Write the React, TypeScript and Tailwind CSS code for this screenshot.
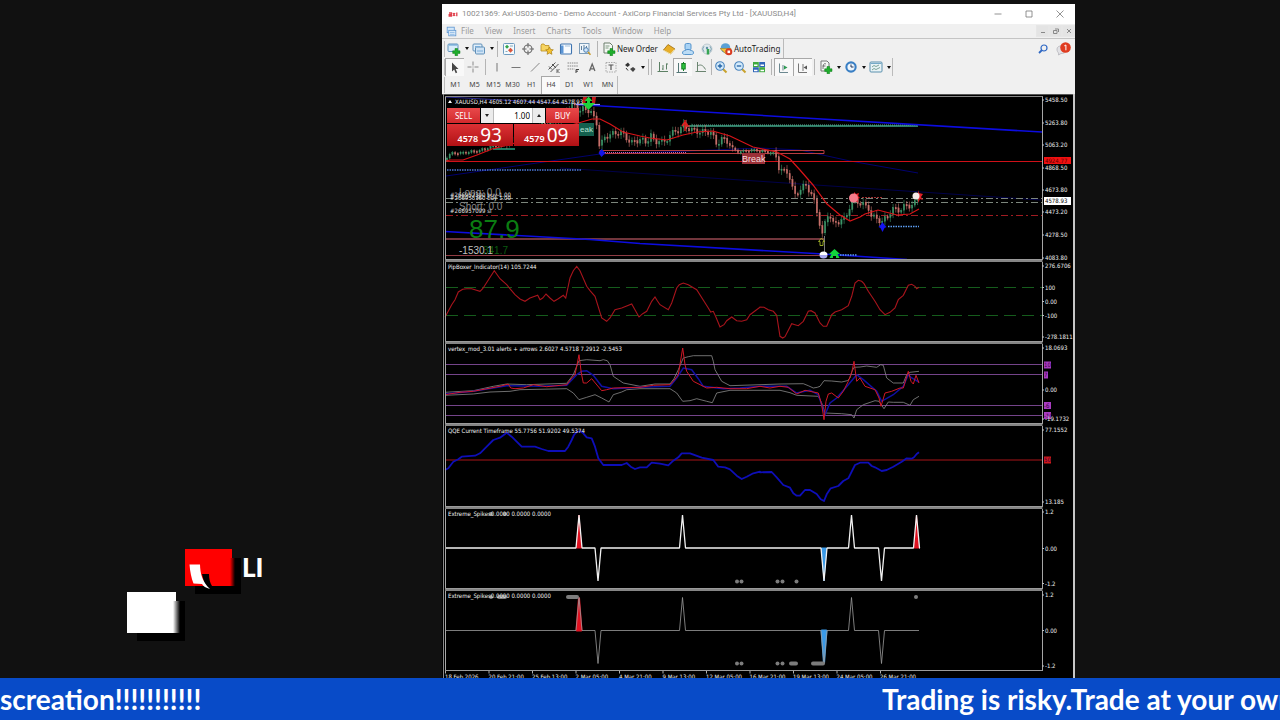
import type { ReactNode } from "react";

/* ---------- helpers ---------- */

// Series are sampled at three units per chart unit, offset by (ox, oy).
function trace(ox: number, oy: number, data: string): string {
  return data
    .trim()
    .split(/\s+/)
    .map((pair) => {
      const [x, y] = pair.split(",").map(Number);
      return `${(ox + x / 3).toFixed(1)},${(oy + y / 3).toFixed(1)}`;
    })
    .join(" ");
}

const UI = "font-['Noto_Sans','Liberation_Sans',sans-serif]";
const CHART = "font-['DejaVu_Sans_Condensed','DejaVu_Sans',sans-serif]";

/* ---------- toolbar icons ---------- */

const plus = <path d="M8 6.5h2.6v2.3H13v2.6h-2.4v2.3H8v-2.3H5.7V8.800H8z" fill="#1fae2c" stroke="#0c7a18" strokeWidth=".5" />;

const icons: Record<string, ReactNode> = {
  newChart: <><rect x="1" y="2" width="10" height="7.500" rx="1" fill="#d8ecfa" stroke="#5f93bd" /><path d="M2 3h8" stroke="#5d9bd0" />{plus}</>,
  profiles: <><rect x="1" y="2" width="9" height="7" rx="1" fill="#e2effa" stroke="#5f8fb8" /><rect x="3.500" y="5" width="9" height="7" rx="1" fill="#cfe3f5" stroke="#5f8fb8" /><path d="M3 4.500h5M5 9h6" stroke="#7aaedb" /></>,
  market: <><rect x="1.500" y="1.500" width="11" height="11" rx="1" fill="#f4fafd" stroke="#6d9bc0" /><path d="m5 2.800 2 2-2 2-2-2z" fill="#34a34a" /><path d="m8.500 5.800 2.500 2.500-2.500 2.500L6 8.300z" fill="#d9563d" /><path d="M8 4h3M3.500 9.500h2" stroke="#8ab" /></>,
  data: <><circle cx="7" cy="7" r="4" fill="none" stroke="#666" strokeWidth="1.100" /><path d="M7 1v4.500M7 8.500V13M1 7h4.500M8.500 7H13" stroke="#666" strokeWidth="1.100" /></>,
  navigator: <><path d="M1 3.500V9h8V3.500H5l-1-1.500H1.800z" fill="#f7d460" stroke="#b98d20" strokeWidth=".8" /><path d="m9.500 5 1.200 2.500 2.600.3-1.900 1.800.5 2.700-2.400-1.300-2.400 1.300.5-2.700-1.900-1.800 2.600-.3z" fill="#f5c22e" stroke="#a87b12" strokeWidth=".7" /></>,
  terminal: <><rect x="1.500" y="2" width="11" height="10" rx="1" fill="#f7fbff" stroke="#3f74b0" strokeWidth="1.100" /><path d="M2 3.500h2.500v8H2z" fill="#5c96d6" /><path d="M6 4h5" stroke="#a5bfd8" /></>,
  tester: <><rect x="1.500" y="1.500" width="9.500" height="10" fill="#eef5fb" stroke="#7c9cb8" /><path d="M3.500 4v4M6 3v5M8.500 4v3" stroke="#5c7f9c" /><circle cx="8" cy="8" r="2.300" fill="#cfe6fa" stroke="#4d7eb0" /><path d="m10 10 2.500 2.800" stroke="#c79a28" strokeWidth="1.500" /></>,
  order: <><path d="M2 1h6l2.500 2.500V11H2z" fill="#f5f8f5" stroke="#6a7d6a" /><path d="M3.500 4h4M3.500 6h3" stroke="#7f9a80" />{plus}</>,
  editor: <><path d="m1.500 8 4.500-5.500L13 7l-4.500 5z" fill="#e8ae28" stroke="#9d6c0c" strokeWidth=".8" /><path d="m2 8.500 6.500 3.500L12.500 7.500" fill="none" stroke="#fff2b8" strokeWidth=".9" /></>,
  community: <><rect x="4" y="1.500" width="6" height="6.500" rx="1.500" fill="#a8d2f4" stroke="#4a8cc8" strokeWidth=".9" /><path d="M1.500 11c0-2 1.500-2.500 3-2.500 1-1.500 4-1.500 5 0 2 0 3 .5 3 2.500 0 1-1 1.500-2 1.500h-7c-1 0-2-.5-2-1.500z" fill="#bcdcf5" stroke="#4a8cc8" strokeWidth=".9" /></>,
  signal: <><circle cx="7" cy="7" r="5" fill="#dfe8ec" stroke="#b4c2c8" strokeWidth=".8" /><path d="M4 4.200a4 4 0 0 0 0 5.600M10 4.200a4 4 0 0 1 0 5.600" fill="none" stroke="#7fa4b4" /><circle cx="7" cy="6" r="1.200" fill="#5e8fa5" /><path d="M8 7v5.500" stroke="#36a552" strokeWidth="2.500" /></>,
  auto: <><circle cx="6.500" cy="6" r="4.800" fill="#5aa0d4" /><path d="M1 6.500h11L7 12z" fill="#f0c43c" stroke="#a98217" strokeWidth=".6" /><circle cx="9.800" cy="9.800" r="3.500" fill="#d83a20" /><rect x="8.500" y="8.500" width="2.600" height="2.600" fill="#fff" /></>,
  cursor: <path d="M5 1.500v9l2.200-2 1.500 3.700 1.500-.7-1.500-3.500h2.800z" fill="#444" />,
  cross: <path d="M7 1.500v4M7 8.500v4M1.500 7h4M8.500 7h4M7 6.500v1" stroke="#888" />,
  vline: <path d="M7 3v8.500" stroke="#777" />,
  hline: <path d="M2.500 7.500h9" stroke="#777" />,
  trend: <path d="m3 11.500 8.500-8.500" stroke="#888" />,
  channel: <><path d="m1.500 9.500 7-7M3.500 12l8-8M2 6.500l3 3M5 4l4 4" stroke="#555" /><path d="M10 9v4M12.500 9 10.500 11l2 2" stroke="#444" fill="none" strokeWidth=".8" /></>,
  fibo: <><path d="M1.500 3h11M1.500 6h11M1.500 9h7" stroke="#888" strokeDasharray="1.500 .7" /><path d="M10 13V9.500h3M10 11.200h2" fill="none" stroke="#444" /></>,
  text: <path d="m4.500 11 2.700-7 2.700 7M5.500 8.800h3.400" fill="none" stroke="#666" strokeWidth="1.300" />,
  label: <><rect x="2" y="2.500" width="10" height="9.500" fill="none" stroke="#aaa" strokeDasharray="1.500 1" /><path d="M4.500 5h5M7 5v5" stroke="#555" strokeWidth="1.200" /></>,
  arrows: <><path d="m2 5 3-2.500L7 5 4.500 7z" fill="#333" /><path d="m7 9 3-2 2.500 2L10 12z" fill="#444" /><path d="m3 8 2 2.500" stroke="#333" /></>,
  bars: <path d="M3.500 2v9.500M1.500 11.500h10.500M7 5v5M7 9h-1M10.500 3.500v6M10.500 4h1.500" fill="none" stroke="#5c8064" />,
  candles: <><path d="M3.500 2v9.500M1.500 11.500h10.500" fill="none" stroke="#577" /><path d="M8.500 1v9" stroke="#137f22" /><rect x="6.800" y="2.500" width="3.400" height="5.500" fill="#2dc43c" stroke="#137f22" /></>,
  line: <path d="M3.500 2v9.500M1.500 11.500h10.500M3.500 6c3-2 5.500-1 8 3.500" fill="none" stroke="#6a8470" />,
  zoomIn: <><path d="m8.500 8.500 4 4" stroke="#c8a22c" strokeWidth="2" /><circle cx="6" cy="6" r="4.300" fill="#d3eafb" stroke="#4a84bd" strokeWidth="1.100" /><path d="M3.800 6h4.400M6 3.800v4.400" stroke="#2463a6" strokeWidth="1.300" /></>,
  zoomOut: <><path d="m8.500 8.500 4 4" stroke="#c8a22c" strokeWidth="2" /><circle cx="6" cy="6" r="4.300" fill="#d3eafb" stroke="#4a84bd" strokeWidth="1.100" /><path d="M3.800 6h4.400" stroke="#2463a6" strokeWidth="1.300" /></>,
  tile: <><rect x="1" y="2" width="5.800" height="5" fill="#3faa3f" /><rect x="7.200" y="2" width="5.800" height="5" fill="#2f66b8" /><rect x="1" y="7.200" width="5.800" height="5" fill="#2f66b8" /><rect x="7.200" y="7.200" width="5.800" height="5" fill="#3faa3f" /><path d="M2 5.200h3.500M8.500 5.200H12M2 10.500h3.500M8.500 10.500H12" stroke="#fff" strokeWidth="1.500" /></>,
  scroll: <><path d="M3.500 2.500v9h8.500M7 4v5.500" fill="none" stroke="#6c8890" /><path d="m8 4.500 3.500 2L8 8.500z" fill="#2c9a50" /></>,
  shift: <><path d="M3.500 2.500v9h8.500M8 3v7" fill="none" stroke="#777" /><path d="m8.500 6.500 3.500-2v4z" fill="#555" /></>,
  indicators: <><path d="M2 1h6l2 2v8H2z" fill="#f4f6f4" stroke="#777" /><path d="M4 9c0-5 1-6 3-5M3.500 6h3" fill="none" stroke="#555" strokeWidth=".8" />{plus}</>,
  clock: <><circle cx="7" cy="7" r="5.700" fill="#3a7fc4" /><circle cx="7" cy="7" r="3.600" fill="#eef6fd" /><path d="M7 4.500V7h2.500" fill="none" stroke="#235" /></>,
  template: <><rect x="1" y="2" width="12" height="10" rx="1" fill="#e9f3f6" stroke="#5a90ae" /><path d="M1.500 3.500h11" stroke="#76aac8" /><path d="m3 7 2-1.500 2 1 3-1.500M3 10l2-1.500 2 1 4-2" fill="none" stroke="#5f8f80" strokeWidth=".8" /></>,
  doc: <><rect x="1.500" y="1.500" width="9" height="7" fill="#d5e9fa" stroke="#5a93d0" /><rect x="3.500" y="5.500" width="9" height="7" fill="#eaf4fd" stroke="#5a93d0" /><path d="M5 8h6M5 10.500h6" stroke="#6ca3dc" /></>,
};

function Icon({ name }: { name: string }) {
  return (
    <svg viewBox="0 0 14 14" className="size-3.5 shrink-0" fill="none" aria-hidden="true">
      {icons[name]}
    </svg>
  );
}

function Tool({ name, label, active, menu }: { name: string; label: string; active?: boolean; menu?: boolean }) {
  return (
    <button
      type="button"
      aria-label={label}
      className={`flex h-full shrink-0 items-center ${menu ? "w-[25px]" : "w-[19px]"} ${
        active ? "border-t border-l border-[#a8a8a8] bg-[#f8f8f8] pl-px" : "pl-0.5"
      }`}
    >
      <Icon name={name} />
      {menu && (
        <svg viewBox="0 0 4 3" className="ml-1 h-[3px] w-1 shrink-0" aria-hidden="true">
          <path d="M0 0h4L2 3z" fill="#111" />
        </svg>
      )}
    </button>
  );
}

function Sep() {
  return <span className="mx-0.5 h-4 w-px shrink-0 bg-[#b4b4b4]" />;
}

function TextTool({ name, label, width }: { name: string; label: string; width: string }) {
  return (
    <button type="button" className={`flex h-full shrink-0 items-center gap-px pl-0.5 text-[8px] whitespace-nowrap text-[#1c1c1c] ${width}`}>
      <Icon name={name} />
      {label}
    </button>
  );
}

/* ---------- chart data ---------- */

const priceCentre: number[][] = [
  [446, 160], [450, 155], [455, 153], [462, 153], [470, 152], [480, 151], [492, 147], [515, 140], [540, 128], [560, 118],
  [576, 104], [581, 112], [586, 108], [592, 112], [598, 123], [601, 147], [607, 136], [615, 134], [621, 132], [628, 138],
  [633, 143], [642, 139], [647, 143], [653, 134], [656, 145], [660, 139], [665, 144], [672, 134], [680, 130], [685, 126],
  [693, 130], [702, 132], [712, 132], [718, 144], [723, 139], [730, 142], [734, 149], [740, 152], [753, 150], [770, 152],
  [777, 154], [779, 166], [785, 172], [790, 172], [792, 182], [796, 196], [802, 189], [807, 185], [812, 192], [817, 206],
  [820, 219], [824, 236], [827, 221], [830, 212], [835, 225], [842, 220], [847, 219], [850, 209], [854, 200], [860, 202],
  [870, 208], [873, 217], [880, 219], [883, 223], [888, 217], [895, 209], [902, 210], [908, 205], [915, 206], [919, 197],
];

function centreAt(x: number): number {
  for (let i = 1; i < priceCentre.length; i++) {
    const [x0, y0] = priceCentre[i - 1];
    const [x1, y1] = priceCentre[i];
    if (x <= x1) return y0 + ((y1 - y0) * (x - x0)) / (x1 - x0);
  }
  return priceCentre[priceCentre.length - 1][1];
}

const candles = Array.from({ length: 174 }, (_, i) => {
  const x = 447 + i * 2.72;
  const quiet = (x > 735 && x < 776) || x < 500;
  const swing = quiet ? 1 : 2.8;
  const open = centreAt(x - 1.4) + Math.sin(i * 1.7) * swing;
  const close = centreAt(x + 1.4) + Math.sin((i + 1) * 1.7) * swing;
  const top = Math.min(open, close);
  const bottom = Math.max(open, close, top + 1.5);
  const wick = quiet ? 1.5 : 2 + 2.5 * Math.abs(Math.sin(i * 1.9));
  return { x, top, bottom, high: top - wick, low: bottom + wick, up: close < open };
});

const maLine =
  "446,161 450,160 463,160 477,155 492,149 515,143 545,133 575,124 592,119 600,119 610,124 623,132 640,136 650,138 667,140 683,135 697,132 713,131 730,136 753,147 777,152 790,159 800,170 813,185 827,204 840,215 850,221 860,217 865,214 878,210 897,215 910,214 919,209";

const pip =
  trace(440, 258, "15,178 35,140 45,125 55,102 68,94 80,92 95,92 120,100 128,92 163,38 180,62 200,80 225,110 240,123 255,130 270,120 293,112 300,125 308,120 318,108 330,120 342,130 355,122 370,112 377,120 390,60 400,38 410,25 420,38 440,85 450,98 465,115 485,180 500,190 510,180 525,155 545,150 575,138 597,177 608,167 620,160 635,130 645,117 652,128 660,140 685,155 695,135 710,90 718,80 730,75 745,80 770,95 805,150 812,162 820,160 828,178 840,207 852,200 860,188 875,177 890,188 905,190 920,185 930,170 960,148") +
  " " +
  trace(760, 258, "0,147 12,148 25,155 40,160 50,172 60,235 68,240 75,236 95,197 105,200 115,203 130,190 145,160 153,158 165,165 180,195 190,205 200,205 215,170 225,162 245,155 265,143 275,115 285,75 295,67 305,70 312,77 325,100 345,130 360,155 375,170 390,163 405,150 415,125 430,112 445,82 455,79 465,85 470,92 477,88");

const vertexRed =
  trace(440, 258, "15,410 60,403 100,400 180,385 205,378 212,390 225,392 250,390 280,380 320,386 380,380 395,360 405,350 417,290 424,345 430,375 440,375 455,362 485,398 500,395 520,390 600,388 640,382 690,380 703,366 715,350 728,270 735,320 740,340 760,370 800,390 830,388 870,392 920,392 960,385") +
  " " +
  trace(760, 258, "0,385 30,390 60,385 85,388 110,408 135,397 160,402 175,405 185,440 192,485 198,430 205,408 215,405 235,420 250,400 265,370 276,340 282,310 290,370 300,360 315,385 345,395 357,420 363,445 375,405 395,400 420,390 430,390 445,340 453,370 460,378 468,352 477,375");

const vertexBlue =
  trace(440, 258, "15,408 100,400 200,383 300,385 380,382 410,350 425,340 440,338 460,352 485,385 520,392 600,388 690,385 710,360 730,330 755,335 775,362 790,385 850,392 900,390 960,385") +
  " " +
  trace(760, 258, "0,385 80,385 110,405 150,397 175,410 195,470 210,435 230,420 265,380 290,350 310,365 350,400 365,430 400,410 430,385 445,350 455,360 477,372");

const vertexUpper =
  trace(440, 258, "15,403 100,398 160,385 200,378 260,380 380,376 400,350 408,330 417,308 440,305 480,308 490,305 502,308 510,320 520,355 535,365 550,375 600,385 645,378 690,378 702,362 715,335 730,300 745,296 760,293 815,293 820,310 825,335 845,370 870,383 960,380") +
  " " +
  trace(760, 258, "0,380 60,378 130,377 145,383 160,390 172,388 180,385 192,368 215,369 245,372 262,368 270,360 276,340 282,328 300,327 320,324 350,328 362,320 370,322 380,360 400,375 430,375 440,350 450,343 477,340");

const vertexLower =
  trace(440, 258, "15,412 100,408 150,402 210,400 240,395 380,392 400,405 417,425 440,418 465,410 485,420 507,432 520,410 545,402 560,395 600,392 690,392 710,405 728,430 750,428 770,422 800,430 817,434 830,405 870,397 960,397") +
  " " +
  trace(760, 258, "0,397 60,397 90,404 110,412 175,415 185,435 195,465 245,467 275,470 282,480 290,455 310,440 345,428 357,430 372,452 385,432 400,433 430,433 450,442 460,425 477,415");

const qqe =
  trace(440, 420, "15,150 25,145 40,125 55,118 65,110 105,107 120,100 140,80 160,60 180,53 200,38 215,50 245,80 285,80 305,87 325,93 375,93 385,80 395,60 402,45 410,36 420,33 430,40 440,52 455,55 465,80 475,115 490,135 545,135 560,129 572,140 585,147 600,142 620,142 635,128 660,131 685,136 700,122 715,112 725,100 750,100 785,113 820,120 835,140 855,142 870,148 890,167 905,177 920,170 940,160 960,155") +
  " " +
  trace(760, 420, "0,157 35,156 50,172 70,195 90,203 100,220 110,227 120,227 135,210 150,210 170,222 182,238 192,243 200,223 212,205 235,198 250,183 265,175 285,135 300,128 325,128 335,138 345,142 365,153 380,150 400,140 425,125 440,115 455,116 462,112 470,102 477,97");

const spikes = [
  { x: 579, dir: -1, fill: "#e01020" },
  { x: 598, dir: 1, fill: "none" },
  { x: 682.5, dir: -1, fill: "none" },
  { x: 824, dir: 1, fill: "#3a9ae8" },
  { x: 851.5, dir: -1, fill: "none" },
  { x: 881.5, dir: 1, fill: "none" },
  { x: 916.5, dir: -1, fill: "#e01020" },
];

const dates = ["18 Feb 2026", "20 Feb 21:00", "25 Feb 13:00", "2 Mar 05:00", "4 Mar 21:00", "9 Mar 13:00", "12 Mar 05:00", "16 Mar 21:00", "19 Mar 13:00", "24 Mar 05:00", "26 Mar 21:00"];

/* ---------- chart panels ---------- */

type Mark = { y: number; text: string };

function Panel({ top, height, bottom = top + height, title, marks, children }: { top: number; height: number; bottom?: number; title?: string; marks: Mark[]; children: ReactNode }) {
  const rule = title ? top + 1 : top + 2.5;
  return (
    <svg viewBox={`442 ${top} 633 ${height}`} className={`block w-full shrink-0 bg-black text-[6px] ${CHART}`} role="img" aria-label={title ?? "XAUUSD,H4"}>
      {children}
      <path d={`M445.500 ${bottom}V${top + 2}M1042.500 ${bottom}V${top + 2}`} fill="none" stroke="#a6a6a6" />
      <path d={`M445 ${rule}H1042.500`} stroke="#858585" strokeWidth={title ? 2 : 1} />
      <path d={`M445 ${bottom - 0.5}H1042.500`} stroke="#9a9a9a" />
      <path d={`M443.500 ${top}V${top + height}`} stroke="#8a8a8a" />
      <path d={`M1074 ${top}V${top + height}`} stroke="#c8c8c8" strokeWidth="2" />
      {title && <text x="448" y={top + 9} fill="#f2f2f2">{title}</text>}
      {marks.map((m) => (
        <g key={m.y}>
          <path d={`M1042 ${m.y}h2`} stroke="#c0c0c0" />
          <text x="1045" y={m.y + 2} fill="#f0f0f0">{m.text}</text>
        </g>
      ))}
    </svg>
  );
}

function Candles() {
  return (
    <g>
      {candles.map((c, i) => (
        <g key={i} stroke={c.up ? "#3c9468" : "#c8706a"} fill={c.up ? "#3c9468" : "#c8706a"}>
          <path d={`M${c.x} ${c.high}V${c.low}`} strokeWidth=".6" />
          <rect x={c.x - 0.7} y={c.top} width="1.4" height={c.bottom - c.top} strokeWidth=".3" />
        </g>
      ))}
    </g>
  );
}

function Spikes({ base, stroke, width, red }: { base: number; stroke: string; width: number; red: boolean }) {
  const list = red ? spikes : spikes.filter((s) => s.x < 900);
  const line = list.map((s) => `H${s.x - 3}L${s.x} ${base + s.dir * 33}L${s.x + 3} ${base}`).join("");
  return (
    <g strokeLinejoin="bevel">
      {list.filter((s) => s.fill !== "none").map((s) => (
        <path key={s.x} d={`M${s.x - 2.5} ${base}L${s.x} ${base + s.dir * 33}L${s.x + 2.5} ${base}z`} fill={s.fill} stroke={s.fill} strokeWidth={red ? 1 : 2} />
      ))}
      <path d={`M446 ${base}${line}H919`} fill="none" stroke={stroke} strokeWidth={width} />
    </g>
  );
}

function PriceChart() {
  const marks: Mark[] = [
    { y: 100, text: "5458.50" }, { y: 123, text: "5263.80" }, { y: 145, text: "5063.20" }, { y: 168, text: "4868.50" },
    { y: 190, text: "4673.80" }, { y: 212, text: "4473.20" }, { y: 235, text: "4278.50" }, { y: 258, text: "4083.80" },
  ];
  return (
    <div className="relative">
      <Panel top={94} height={166} marks={marks}>
        <path d="M442 94.500H1075" stroke="#555" />
        <g fill="none">
          <path d="M446 176L530 164 600 154 690 151 760 148 800 150 850 161 918 173" stroke="#00006e" />
          <path d="M560 168L1041 200" stroke="#00005c" strokeWidth=".8" />
          <path d="M446 97L577 104" stroke="#3030b0" strokeWidth=".8" />
          <path d="M446 198.500H1042M446 202.500H1042" stroke="#7c867c" strokeDasharray="7 3 2 3" />
          <path d="M446 215.500H1042" stroke="#a01c22" strokeDasharray="7 3 2 3" />
          <path d="M446 161.500H1042" stroke="#d01018" />
          <path d="M446 239H824" stroke="#984850" strokeWidth="1.500" />
          <path d="M446 255.500H824" stroke="#903c44" />
          <path d="M600 150.500H824V153.500H600z" stroke="#b83c40" />
          <path d="M603 152.500H686" stroke="#c060c8" strokeDasharray="1 1" />
          <path d="M447 170H582" stroke="#4c78d8" strokeWidth="1.500" strokeDasharray="1.500 1" />
          <path d="M493 149H515" stroke="#1f7a60" strokeWidth="2" />
          <path d="M685 126H918" stroke="#2e7c66" strokeWidth="2" />
          <path d="M692 125H918" stroke="#5aa890" strokeDasharray="1 1" />
          <path d="M577 104.500L1042 132" stroke="#0c0ce0" strokeWidth="1.600" />
          <path d="M445 231.500L590 239.500 640 243.500 823 254 907 259.500" stroke="#0c0ce0" strokeWidth="1.600" />
          <path d="M888 226.500H919M840 255H857" stroke="#5c9cf0" strokeWidth="1.500" strokeDasharray="1.500 1" />
        </g>
        <Candles />
        <path d="M824.500 236V256" stroke="#999" strokeWidth=".8" />
        <polyline points={maLine} fill="none" stroke="#d81418" strokeWidth="1.200" />
        <path d="M576 104.500h24" stroke="#9098ff" strokeWidth="1.200" />
        <path d="M583 97h4l-2 7h-3zM592 97h4l-1 7h-3z" fill="#c01818" />
        <path d="M588.500 96.500l4 4.500h-2.500v2h5l-6.500 7-6.500-7h5v-2h-2.500z" fill="#1ed43a" />
        <rect x="579" y="123" width="15" height="13" fill="#14604e" />
        <text x="580" y="132" fill="#b6e4d6" className="font-['Liberation_Sans',sans-serif] text-[8px]">eak</text>
        <path d="M685 120v11M682 126l3-4 3 4M685.500 126h4" stroke="#e02020" strokeWidth="1.500" fill="none" />
        <path d="M601.500 149l4 4-4 4-3-4z" fill="#1414e8" />
        <rect x="742" y="153" width="23" height="11" fill="#9c3038" />
        <text x="742" y="162" fill="#f6dede" className="font-['Liberation_Sans',sans-serif] text-[9px]">Break</text>
        <path d="M821.500 238l3 3.500h-1.500v4h-3v-4h-1.500z" fill="none" stroke="#a4b428" strokeWidth=".9" />
        <path d="M819.500 255a4 3.500 0 0 1 8 0z" fill="#fff" /><path d="M819.500 255a4 3.500 0 0 0 8 0z" fill="#a8a8f0" />
        <path d="M834.500 249l5.500 5h-2.500l2 4h-3.500v-2h-3v2h-3.500l2-4h-2.500z" fill="#12d43c" />
        <path d="M854 192l2 2 3-1-1 3 2 2-3 1 1 3-4-1z" fill="#e81c24" />
        <circle cx="853.500" cy="198" r="4.500" fill="#f47c8c" />
        <path d="M918 190l1 3 4 1-2 3 2 3-3-1-2 4z" fill="#e02028" />
        <circle cx="916" cy="196" r="3.500" fill="#f4e8e8" />
        <path d="M862 197.500H882" stroke="#a03030" strokeDasharray="2 1" />
        <path d="M882.500 222l2 3 2 2-2 1-2 4-2-4-2-1 2-2z" fill="#1414f0" />
        <path d="M448 103l2-3 2 3z" fill="#fff" />
        <text x="455" y="104" fill="#ececec">XAUUSD,H4 4605.12 4607.44 4547.64 4578.93</text>
        <g className="font-['Liberation_Sans',sans-serif]">
          <g fill="#858585" className="text-[10px]">
            <text x="459" y="196">Long: 0.0</text>
            <text x="459" y="210">Short: 0.0</text>
          </g>
          <text x="469" y="238" fill="#0b7d12" className="text-[26px]">87.9</text>
          <text x="483" y="254" fill="#0a5c10" className="text-[10px]">341.7</text>
          <text x="459" y="254" fill="#c0c0c0" className="text-[10px]">-1530.1</text>
        </g>
        <g fill="#e2e2e2">
          <text x="450" y="197">#266952300 buy 1.00</text>
          <text x="450" y="200">#266955160 buy 1.00</text>
          <text x="450" y="213">#266957099 sl</text>
        </g>
        <rect x="1044" y="157" width="27" height="7" fill="#f01010" />
        <text x="1045" y="163" fill="#5c0000">4924.77</text>
      </Panel>
      <svg viewBox="442 94 633 166" className={`absolute inset-0 w-full text-[6px] ${CHART}`} aria-hidden="true">
        <rect x="1044" y="197" width="27" height="8" fill="#fff" />
        <text x="1045" y="203" fill="#000">4578.93</text>
      </svg>
      <OrderTicket />
    </div>
  );
}

function OrderTicket() {
  const red = "bg-linear-to-b from-[#e8484a] to-[#d2282c]";
  const price = "flex h-[22px] flex-1 items-baseline justify-center gap-0.5 bg-linear-to-b from-[#dc3034] to-[#b01014] leading-[22px]";
  return (
    <div className={`absolute top-[14px] left-[5px] flex w-[132px] flex-col gap-px text-white ${UI}`}>
      <div className="flex h-[15px]">
        <button type="button" className={`w-[33px] text-[8px] leading-[15px] ${red}`}>SELL</button>
        <button type="button" aria-label="Decrease volume" className="ml-px flex w-3 items-center justify-center bg-[#ececec]">
          <svg viewBox="0 0 4 3" className="h-[3px] w-1"><path d="M0 0h4L2 3z" fill="#222" /></svg>
        </button>
        <input aria-label="Volume" defaultValue="1.00" className="w-10 min-w-0 border-x border-[#bbb] bg-white pr-0.5 text-right text-[8px] text-black" />
        <button type="button" aria-label="Increase volume" className="mr-px flex w-3 items-center justify-center bg-[#ececec]">
          <svg viewBox="0 0 4 3" className="h-[3px] w-1"><path d="M0 3h4L2 0z" fill="#222" /></svg>
        </button>
        <button type="button" className={`w-[33px] text-[8px] leading-[15px] ${red}`}>BUY</button>
      </div>
      <div className="flex gap-px">
        <button type="button" className={price}><b className="text-[9px] font-semibold">4578</b><span className="text-[19px]">93</span></button>
        <button type="button" className={price}><b className="text-[9px] font-semibold">4579</b><span className="text-[19px]">09</span></button>
      </div>
    </div>
  );
}

function Tags({ color, tags }: { color: string; tags: Mark[] }) {
  return (
    <g>
      {tags.map((t) => (
        <g key={t.y}>
          <rect x="1044" y={t.y - 3.5} width={t.text.length > 1 ? 7 : 4} height="7" fill={color} />
          <text x="1044" y={t.y + 2} fill="#3a0040">{t.text}</text>
        </g>
      ))}
    </g>
  );
}

function Charts() {
  return (
    <div className="flex min-h-0 flex-1 flex-col overflow-hidden bg-black">
      <PriceChart />
      <Panel top={260} height={82} title="PipBoxer_Indicator(14) 105.7244" marks={[{ y: 266, text: "276.6706" }, { y: 287.5, text: "100" }, { y: 301.5, text: "0.00" }, { y: 315.5, text: "-100" }, { y: 337, text: "-278.1811" }]}>
        <path d="M446 287.500H1042M446 315.500H1042" stroke="#155c1c" strokeDasharray="12 6" />
        <polyline points={pip} fill="none" stroke="#a8141c" strokeWidth="1.100" />
      </Panel>
      <Panel top={342} height={82} title="vertex_mod_3.01 alerts + arrows 2.6027 4.5718 7.2912 -2.5453" marks={[{ y: 348, text: "18.0693" }, { y: 390, text: "0.00" }, { y: 419, text: "-19.1732" }]}>
        <path d="M446 364.500H1042M446 374.500H1042M446 405.500H1042M446 415.500H1042" stroke="#74448a" strokeWidth="1.200" />
        <g fill="none">
          <polyline points={vertexUpper} stroke="#8a8a8a" strokeWidth=".8" />
          <polyline points={vertexLower} stroke="#8a8a8a" strokeWidth=".8" />
          <polyline points={vertexBlue} stroke="#1010a4" strokeWidth="1.500" />
          <polyline points={vertexRed} stroke="#d01826" />
        </g>
        <Tags color="#a83cc0" tags={[{ y: 365, text: "10" }, { y: 375, text: "7" }, { y: 405.5, text: "-6" }, { y: 415.5, text: "-10" }]} />
      </Panel>
      <Panel top={424} height={83} title="QQE Current Timeframe 55.7756 51.9202 49.5374" marks={[{ y: 430, text: "77.1552" }, { y: 502, text: "13.185" }]}>
        <path d="M446 460H1042" stroke="#a81418" strokeWidth="1.200" />
        <polyline points={qqe} fill="none" stroke="#0e0eb8" strokeWidth="1.800" strokeLinejoin="round" />
        <Tags color="#d01818" tags={[{ y: 460, text: "50" }]} />
      </Panel>
      <Panel top={507} height={82} title="Extreme_Spikes0.0000 0.0000 0.0000" marks={[{ y: 512, text: "1.2" }, { y: 548.5, text: "0.00" }, { y: 583.5, text: "-1.2" }]}>
        <Spikes base={548} stroke="#f2f2f2" width={1.3} red />
        {[737, 741.5, 777.5, 782.5, 796.5].map((x) => <circle key={x} cx={x} cy="581.500" r="2" fill="#7c7c7c" />)}
        <circle cx="491" cy="514" r="2" fill="#7c7c7c" /><circle cx="505" cy="514" r="2" fill="#7c7c7c" />
      </Panel>
      <Panel top={589} height={95} bottom={671} title="Extreme_Spikes0.0000 0.0000 0.0000" marks={[{ y: 595, text: "1.2" }, { y: 630.5, text: "0.00" }, { y: 666, text: "-1.2" }]}>
        <Spikes base={630.5} stroke="#9c9c9c" width={0.8} red={false} />
        <g fill="#7c7c7c">
          {[737, 741.5, 777.5, 782.5].map((x) => <circle key={x} cx={x} cy="663.500" r="2" />)}
          <rect x="789" y="661.500" width="9" height="4" rx="2" />
          <rect x="811" y="661.500" width="14" height="4" rx="2" />
          <rect x="566" y="595" width="13" height="4" rx="2" />
          <circle cx="491" cy="597" r="2" />
          <rect x="497" y="595" width="10" height="4" rx="2" />
          <circle cx="916" cy="597" r="2" />
        </g>
        {dates.map((d, i) => (
          <g key={d}>
            <path d={`M${445.5 + i * 43.5} 671v2.500`} stroke="#b0b0b0" />
            <text x={445 + i * 43.5} y="679" fill="#f0f0f0">{d}</text>
          </g>
        ))}
      </Panel>
    </div>
  );
}

/* ---------- window ---------- */

function TitleBar() {
  const ctl = "flex w-[31px] items-center justify-center";
  return (
    <header className="flex h-5 shrink-0 items-center bg-white text-[8px] text-[#8c8c8c]">
      <svg viewBox="0 0 10 5" className="mr-1 ml-1.5 h-[5px] w-2.5" fill="none" stroke="#e0404c" strokeWidth="1.300" aria-hidden="true">
        <path d="M1 1h2.500v3H1.200V2.700h2M5 1l2 3M7 1 5 4M8.800.5V4.300" />
      </svg>
      <h1 className="min-w-0 flex-1 font-[Roboto,sans-serif] whitespace-nowrap">10021369: Axi-US03-Demo - Demo Account - AxiCorp Financial Services Pty Ltd - [XAUUSD,H4]</h1>
      <button type="button" aria-label="Minimize" className={ctl}><svg viewBox="0 0 8 8" className="size-2"><path d="M.5 4h7" stroke="#777" strokeWidth=".8" /></svg></button>
      <button type="button" aria-label="Maximize" className={ctl}><svg viewBox="0 0 8 8" className="size-2"><path d="M1 1h6v6H1z" fill="none" stroke="#777" strokeWidth=".8" /></svg></button>
      <button type="button" aria-label="Close" className={ctl}><svg viewBox="0 0 8 8" className="size-2"><path d="m.5.5 7 7M7.500.5l-7 7" stroke="#777" strokeWidth=".8" /></svg></button>
    </header>
  );
}

function MenuBar() {
  const ctl = "flex h-3 w-[13px] items-center justify-center border border-[#e6e6e6] bg-[#e4e4e4]";
  const svg = { viewBox: "0 0 6 6", className: "size-1.5", fill: "none", stroke: "#888" };
  return (
    <nav className="flex h-[15px] shrink-0 items-center border-b border-[#c4c4c4] pl-px text-[8px] text-[#9a9a9a]">
      <span className="mr-px flex w-[17px] justify-center [&>svg]:size-[11px]"><Icon name="doc" /></span>
      <div className="flex flex-1 gap-[11px] [&>button]:leading-3">
        {["File", "View", "Insert", "Charts", "Tools", "Window", "Help"].map((m) => (
          <button key={m} type="button">{m}</button>
        ))}
      </div>
      <button type="button" aria-label="Minimize chart" className={ctl}><svg {...svg}><path d="M1 4.500h4" /></svg></button>
      <button type="button" aria-label="Restore chart" className={ctl}><svg {...svg}><path d="M2 1h3.500v3M.5 2.500H4v3H.5z" /></svg></button>
      <button type="button" aria-label="Close chart" className={ctl}><svg {...svg}><path d="m1 1 4 4M5 1 1 5" /></svg></button>
    </nav>
  );
}

function Toolbars() {
  return (
    <>
      <div className="flex h-[19px] shrink-0 items-center pl-0.5">
        <span className="h-4 w-px bg-[#bbb]" />
        <Tool name="newChart" label="New chart" menu />
        <Tool name="profiles" label="Profiles" menu />
        <Sep />
        <Tool name="market" label="Market Watch" />
        <Tool name="data" label="Data Window" />
        <Tool name="navigator" label="Navigator" />
        <Tool name="terminal" label="Terminal" />
        <Tool name="tester" label="Strategy Tester" />
        <Sep />
        <TextTool name="order" label="New Order" width="w-[60px]" />
        <Tool name="editor" label="MetaEditor" />
        <Tool name="community" label="Community" />
        <Tool name="signal" label="Signals" />
        <TextTool name="auto" label="AutoTrading" width="w-[66px]" />
        <span className="h-full w-px bg-[#bbb]" />
        <span className="flex-1" />
        <button type="button" aria-label="Search" className="mr-2">
          <svg viewBox="0 0 10 10" className="size-2.5" fill="none"><circle cx="6" cy="4" r="3" stroke="#2f68c4" strokeWidth="1.200" /><path d="M4 6 1 9" stroke="#2f68c4" strokeWidth="1.800" /></svg>
        </button>
        <button type="button" aria-label="1 notification" className="mr-1">
          <svg viewBox="0 0 15 14" className="h-3.5 w-[15px]"><path d="M1 7c0-2 2-3 4-3s5 1 5 4-3 3.500-5 3.500L2.500 13l.2-2C1.500 10 1 9 1 7z" fill="#e2e2e6" stroke="#b4b4ba" strokeWidth=".8" /><circle cx="9.500" cy="5.500" r="5.300" fill="#e03c20" /><path d="M8.300 3.800 9.900 3v5.300" fill="none" stroke="#fff" /></svg>
        </button>
      </div>
      <div className="flex h-[18px] shrink-0 items-center pl-0.5">
        <span className="h-4 w-px bg-[#bbb]" />
        <Tool name="cursor" label="Cursor" active />
        <Tool name="cross" label="Crosshair" />
        <Sep />
        <Tool name="vline" label="Vertical line" />
        <Tool name="hline" label="Horizontal line" />
        <Tool name="trend" label="Trendline" />
        <Tool name="channel" label="Equidistant channel" />
        <Tool name="fibo" label="Fibonacci retracement" />
        <Tool name="text" label="Text" />
        <Tool name="label" label="Text label" />
        <Tool name="arrows" label="Arrows" menu />
        <Sep />
        <span className="mr-0.5 h-4 w-px shrink-0 bg-[#b4b4b4]" />
        <Tool name="bars" label="Bar chart" />
        <Tool name="candles" label="Candlesticks" active />
        <Tool name="line" label="Line chart" />
        <span className="h-4 w-px shrink-0 bg-[#b4b4b4]" />
        <Tool name="zoomIn" label="Zoom in" />
        <Tool name="zoomOut" label="Zoom out" />
        <Tool name="tile" label="Tile windows" />
        <Sep />
        <Tool name="scroll" label="Auto scroll" active />
        <Tool name="shift" label="Chart shift" active />
        <Sep />
        <Tool name="indicators" label="Indicators" menu />
        <Tool name="clock" label="Periods" menu />
        <Tool name="template" label="Templates" menu />
        <span className="h-full w-px bg-[#bbb]" />
      </div>
      <div className="flex h-[18px] shrink-0 items-center pl-0.5 text-[7px] text-[#444]">
        <span className="mr-px h-4 w-px bg-[#bbb]" />
        {["M1", "M5", "M15", "M30", "H1", "H4", "D1", "W1", "MN"].map((t) => (
          <button key={t} type="button" className={`h-full w-[19px] shrink-0 text-center ${t === "H4" ? "border-t border-l border-[#a8a8a8] bg-[#fafafa]" : ""}`}>
            {t}
          </button>
        ))}
        <span className="h-full w-px bg-[#bbb]" />
      </div>
    </>
  );
}

function Intro() {
  return (
    <aside className="flex items-end pb-[37px] pl-[127px]">
      <div className="flex items-start">
        <svg viewBox="0 0 115 92" className="h-[92px] w-[115px]" aria-hidden="true">
          <defs>
            <linearGradient id="whiteEdge" x1="0" x2="1"><stop offset="0" stopColor="#fff" /><stop offset="1" stopColor="#000" /></linearGradient>
            <linearGradient id="redEdge" x1="0" x2="1"><stop offset="0" stopColor="#f00" /><stop offset="1" stopColor="#000" /></linearGradient>
          </defs>
          <path d="M68 9h46v36H68z" fill="#000" />
          <path d="M58 0h47v37H58z" fill="#f00" />
          <path d="M103 9h5v28h-5z" fill="url(#redEdge)" />
          <path d="M75 25h7c0 5 1 9 3 12h-7z" fill="#000" />
          <path d="M62.500 15.500H73c.3 9 2 17 10 24.500-4-1-7-3-8-5l-8.500-.5c-2-5-3.500-12-4-19z" fill="#fff" />
          <path d="M10 52h48v41H10z" fill="#000" />
          <path d="M0 43h49v41H0z" fill="#fff" />
          <path d="M46 52h7v32h-7z" fill="url(#whiteEdge)" />
        </svg>
        <span className="mt-1 font-[Lato,sans-serif] text-[26px] leading-7 font-black text-white">LI</span>
      </div>
    </aside>
  );
}

export default function App() {
  return (
    <div className="flex h-screen flex-col overflow-hidden bg-[#111]">
      <main className="grid min-h-0 flex-1 grid-cols-[442fr_633fr_205fr]">
        <Intro />
        <section className={`mt-1 flex min-h-0 min-w-0 flex-col overflow-hidden bg-[#f0f0f0] ${UI}`}>
          <TitleBar />
          <MenuBar />
          <Toolbars />
          <Charts />
        </section>
      </main>
      <footer className="grid h-[42px] shrink-0 grid-cols-[882fr_398fr] items-center overflow-hidden bg-[#084bc8] font-[Lato,sans-serif] text-[28px] font-bold whitespace-nowrap text-white">
        <p>screation!!!!!!!!!!!</p>
        <p className="min-w-0 overflow-hidden">Trading is risky.Trade at your own</p>
      </footer>
    </div>
  );
}
